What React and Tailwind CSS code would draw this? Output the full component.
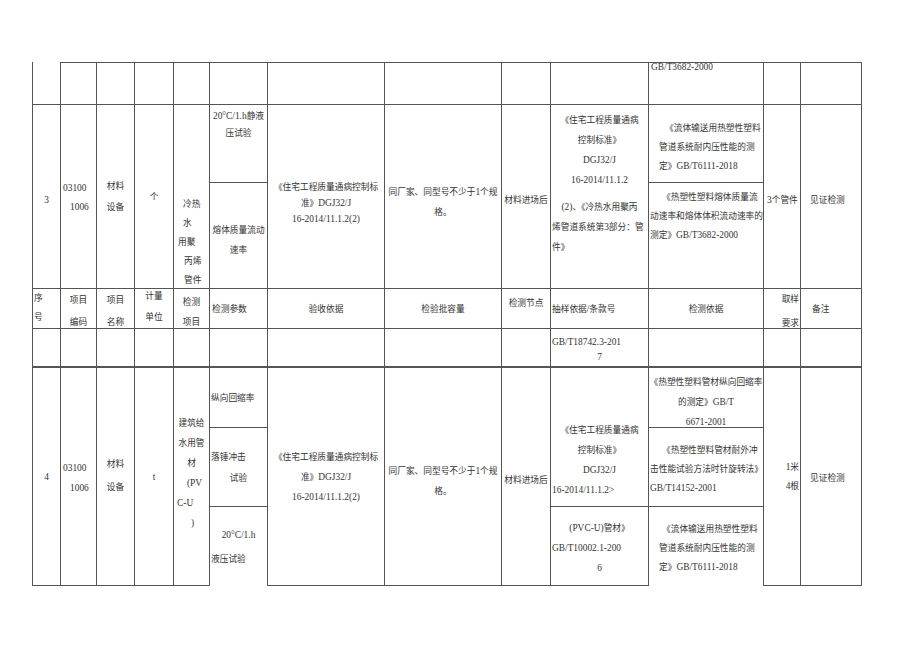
const CJK = /([\u2E80-\u9FFF\u3000-\u303F\uFF00-\uFFEF]+)/;

// Chinese runs are a little narrower than the Times-like Latin text
function T({ s }) {
  return s.split(CJK).map((p, i) =>
    CJK.test(p) ? (
      <span key={i} className="text-[8.7px]">
        {p}
      </span>
    ) : (
      p
    )
  );
}

function C({ className = "", b = "border-r border-b", lh = "leading-[18px]", lines = [] }) {
  return (
    <div className={`flex flex-col border-[#555] ${b} ${className}`}>
      {lines.map(([s, c = ""], i) => (
        <div key={i} className={`whitespace-nowrap ${lh} ${c}`}>
          <T s={s} />
        </div>
      ))}
    </div>
  );
}

const ctr = "text-center";

export default function App() {
  return (
    <main className="min-h-screen bg-white pl-[32px] pt-[62px] font-['Liberation_Serif','Noto_Sans_CJK_SC',serif] text-[9.4px] text-[#333]">
      <div className="grid w-[830px] grid-cols-[29px_36px_38px_39px_36px_58px_117px_117px_49px_98px_115px_37px_61px] grid-rows-[43px_78px_106px_40px_39px_60px_79px_79px]">
        {/* 上一项的尾行 */}
        <C className="col-start-1 row-start-1" b="border-l border-r border-b" />
        <C className="col-start-2 row-start-1" b="border-t border-r border-b" />
        <C className="col-start-3 row-start-1" b="border-t border-r border-b" />
        <C className="col-start-4 row-start-1" b="border-t border-r border-b" />
        <C className="col-start-5 row-start-1" b="border-t border-r border-b" />
        <C className="col-start-6 row-start-1" b="border-t border-r border-b" />
        <C className="col-start-7 row-start-1" b="border-t border-r border-b" />
        <C className="col-start-8 row-start-1" b="border-t border-r border-b" />
        <C className="col-start-9 row-start-1" b="border-t border-r border-b" />
        <C className="col-start-10 row-start-1" b="border-t border-r border-b" />
        <C
          className="col-start-11 row-start-1"
          b="border-t border-r border-b"
          lh="leading-[9px]"
          lines={[["GB/T3682-2000", "pl-[2px]"]]}
        />
        <C className="col-start-12 row-start-1" b="border-t border-r border-b" />
        <C className="col-start-13 row-start-1" b="border-t border-r border-b" />

        {/* 序号 3 */}
        <C className="col-start-1 row-start-2 row-span-2 pt-[86px]" b="border-l border-r border-b" lines={[["3", ctr]]} />
        <C
          className="col-start-2 row-start-2 row-span-2 pt-[74px]"
          lh="leading-[19px]"
          lines={[["03100", "pl-[2px]"], ["1006", "pl-[9px]"]]}
        />
        <C className="col-start-3 row-start-2 row-span-2 pt-[71px]" lh="leading-[21px]" lines={[["材料", ctr], ["设备", ctr]]} />
        <C className="col-start-4 row-start-2 row-span-2 pt-[83px]" lines={[["个", ctr]]} />
        <C
          className="col-start-5 row-start-2 row-span-2 pt-[90px]"
          lh="leading-[19px]"
          lines={[
            ["冷热", "pl-[9px]"],
            ["水", "pl-[9px]"],
            ["用聚", "pl-[4px]"],
            ["丙烯", "pl-[10px]"],
            ["管件", "pl-[10px]"],
          ]}
        />
        <C className="col-start-6 row-start-2 pt-[3px]" lh="leading-[17px]" lines={[["20°C/1.h静液", ctr], ["压试验", ctr]]} />
        <C className="col-start-6 row-start-3 pt-[37px]" lh="leading-[20px]" lines={[["熔体质量流动", ctr], ["速率", ctr]]} />
        <C
          className="col-start-7 row-start-2 row-span-2 pt-[74px]"
          lh="leading-[16px]"
          lines={[["《住宅工程质量通病控制标", ctr], ["准》DGJ32/J", ctr], ["16-2014/11.1.2(2)", ctr]]}
        />
        <C
          className="col-start-8 row-start-2 row-span-2 pt-[77px]"
          lh="leading-[20px]"
          lines={[["同厂家、同型号不少于1个规", ctr], ["格。", ctr]]}
        />
        <C className="col-start-9 row-start-2 row-span-2 pt-[86px]" lines={[["材料进场后", ctr]]} />
        <C
          className="col-start-10 row-start-2 row-span-2 pt-[5px]"
          lh="leading-[20px]"
          lines={[
            ["《住宅工程质量通病", ctr],
            ["控制标准》", ctr],
            ["DGJ32/J", ctr],
            ["16-2014/11.1.2", ctr],
            ["(2)、《冷热水用聚丙", "text-center mt-[7px]"],
            ["烯管道系统第3部分：管", "pl-[1px]"],
            ["件》", "pl-[1px]"],
          ]}
        />
        <C
          className="col-start-11 row-start-2 pt-[14px]"
          lh="leading-[19px]"
          lines={[
            ["《流体输送用热塑性塑料", "pl-[16px]"],
            ["管道系统耐内压性能的测", "pl-[10px]"],
            ["定》GB/T6111-2018", "pl-[10px]"],
          ]}
        />
        <C
          className="col-start-11 row-start-3 pt-[5px]"
          lh="leading-[19px]"
          lines={[
            ["《热塑性塑料熔体质量流", "pl-[13px]"],
            ["动速率和熔体体积流动速率的", "pl-[1px]"],
            ["测定》GB/T3682-2000", "pl-[1px]"],
          ]}
        />
        <C className="col-start-12 row-start-2 row-span-2 pt-[86px]" lines={[["3个管件", "pl-[3px]"]]} />
        <C className="col-start-13 row-start-2 row-span-2 pt-[86px]" lines={[["见证检测", "pl-[9px]"]]} />

        {/* 表头 */}
        <C className="col-start-1 row-start-4" b="border-l border-r border-b" lh="leading-[19px]" lines={[["序", "pl-[1px]"], ["号", "pl-[1px]"]]} />
        <C className="col-start-2 row-start-4" lh="leading-[22px]" lines={[["项目", ctr], ["编码", ctr]]} />
        <C className="col-start-3 row-start-4" lh="leading-[22px]" lines={[["项目", ctr], ["名称", ctr]]} />
        <C className="col-start-4 row-start-4" lh="leading-[21px]" lines={[["计量", "text-center -mt-[3px]"], ["单位", ctr]]} />
        <C className="col-start-5 row-start-4 pt-[3px]" lh="leading-[20px]" lines={[["检测", ctr], ["项目", ctr]]} />
        <C className="col-start-6 row-start-4 justify-center" lines={[["检测参数", "pl-[2px]"]]} />
        <C className="col-start-7 row-start-4 justify-center" lines={[["验收依据", ctr]]} />
        <C className="col-start-8 row-start-4 justify-center" lines={[["检验批容量", ctr]]} />
        <C className="col-start-9 row-start-4 pt-[5px]" lines={[["检测节点", ctr]]} />
        <C className="col-start-10 row-start-4 justify-center" lines={[["抽样依据/条款号", "pl-[1px]"]]} />
        <C className="col-start-11 row-start-4 justify-center" lines={[["检测依据", ctr]]} />
        <C
          className="col-start-12 row-start-4"
          lh="leading-[24px]"
          lines={[["取样", "text-right pr-[1px] -mt-[2px]"], ["要求", "text-right pr-[1px]"]]}
        />
        <C className="col-start-13 row-start-4 justify-center" lines={[["备注", "pl-[11px]"]]} />

        {/* 续行 */}
        <C className="col-start-1 row-start-5" b="border-l border-r border-b-2" />
        <C className="col-start-2 row-start-5" b="border-r border-b-2" />
        <C className="col-start-3 row-start-5" b="border-r border-b-2" />
        <C className="col-start-4 row-start-5" b="border-r border-b-2" />
        <C className="col-start-5 row-start-5" b="border-r border-b-2" />
        <C className="col-start-6 row-start-5" b="border-r border-b-2" />
        <C className="col-start-7 row-start-5" b="border-r border-b-2" />
        <C className="col-start-8 row-start-5" b="border-r border-b-2" />
        <C className="col-start-9 row-start-5" b="border-r border-b-2" />
        <C
          className="col-start-10 row-start-5 pt-[6px]"
          b="border-r border-b-2"
          lh="leading-[15px]"
          lines={[["GB/T18742.3-201", "pl-[1px]"], ["7", ctr]]}
        />
        <C className="col-start-11 row-start-5" b="border-r border-b-2" />
        <C className="col-start-12 row-start-5" b="border-r border-b-2" />
        <C className="col-start-13 row-start-5" b="border-r border-b-2" />

        {/* 序号 4 */}
        <C className="col-start-1 row-start-6 row-span-3 justify-center" b="border-l border-r border-b" lines={[["4", ctr]]} />
        <C
          className="col-start-2 row-start-6 row-span-3 pt-[90px]"
          lh="leading-[20px]"
          lines={[["03100", "pl-[2px]"], ["1006", "pl-[9px]"]]}
        />
        <C className="col-start-3 row-start-6 row-span-3 pt-[85px]" lh="leading-[23px]" lines={[["材料", ctr], ["设备", ctr]]} />
        <C className="col-start-4 row-start-6 row-span-3 justify-center" lines={[["t", ctr]]} />
        <C
          className="col-start-5 row-start-6 row-span-3 pt-[45px]"
          lh="leading-[20px]"
          lines={[
            ["建筑给", ctr],
            ["水用管", ctr],
            ["材", ctr],
            ["(PV", "pl-[13px]"],
            ["C-U", "pl-[3px]"],
            [")", "pl-[17px]"],
          ]}
        />
        <C className="col-start-6 row-start-6 justify-center" lines={[["纵向回缩率", "pl-[1px]"]]} />
        <C className="col-start-6 row-start-7 pt-[19px]" lh="leading-[21px]" lines={[["落锤冲击", "pl-[1px]"], ["试验", ctr]]} />
        <C
          className="col-start-6 row-start-8 pt-[16px]"
          b="border-r"
          lh="leading-[24px]"
          lines={[["20°C/1.h", ctr], ["液压试验", "pl-[1px]"]]}
        />
        <C
          className="col-start-7 row-start-6 row-span-3 pt-[79px]"
          lh="leading-[20px]"
          lines={[["《住宅工程质量通病控制标", ctr], ["准》DGJ32/J", ctr], ["16-2014/11.1.2(2)", ctr]]}
        />
        <C
          className="col-start-8 row-start-6 row-span-3 pt-[93px]"
          lh="leading-[20px]"
          lines={[["同厂家、同型号不少于1个规", ctr], ["格。", ctr]]}
        />
        <C className="col-start-9 row-start-6 row-span-3 pt-[103px]" lines={[["材料进场后", ctr]]} />
        <C
          className="col-start-10 row-start-6 row-span-2 pt-[52px]"
          lh="leading-[20px]"
          lines={[
            ["《住宅工程质量通病", ctr],
            ["控制标准》", ctr],
            ["DGJ32/J", ctr],
            ["16-2014/11.1.2>", "pl-[1px]"],
          ]}
        />
        <C
          className="col-start-10 row-start-8 pt-[11px]"
          lh="leading-[20px]"
          lines={[["(PVC-U)管材》", ctr], ["GB/T10002.1-200", "pl-[1px]"], ["6", ctr]]}
        />
        <C
          className="col-start-11 row-start-6 pt-[4px]"
          lh="leading-[20px]"
          lines={[["《热塑性塑料管材纵向回缩率", ctr], ["的测定》GB/T", ctr], ["6671-2001", ctr]]}
        />
        <C
          className="col-start-11 row-start-7 pt-[13px]"
          lh="leading-[19px]"
          lines={[
            ["《热塑性塑料管材耐外冲", "pl-[13px]"],
            ["击性能试验方法时针旋转法》", "pl-[1px]"],
            ["GB/T14152-2001", "pl-[1px]"],
          ]}
        />
        <C
          className="col-start-11 row-start-8 pt-[13px]"
          b="border-r"
          lh="leading-[19px]"
          lines={[
            ["《流体输送用热塑性塑料", "pl-[13px]"],
            ["管道系统耐内压性能的测", "pl-[10px]"],
            ["定》GB/T6111-2018", "pl-[10px]"],
          ]}
        />
        <C
          className="col-start-12 row-start-6 row-span-3 pt-[90px]"
          lh="leading-[19px]"
          lines={[["1米", "text-right pr-[1px]"], ["4根", "text-right pr-[1px]"]]}
        />
        <C className="col-start-13 row-start-6 row-span-3 pt-[101px]" lines={[["见证检测", "pl-[9px]"]]} />
      </div>
    </main>
  );
}
